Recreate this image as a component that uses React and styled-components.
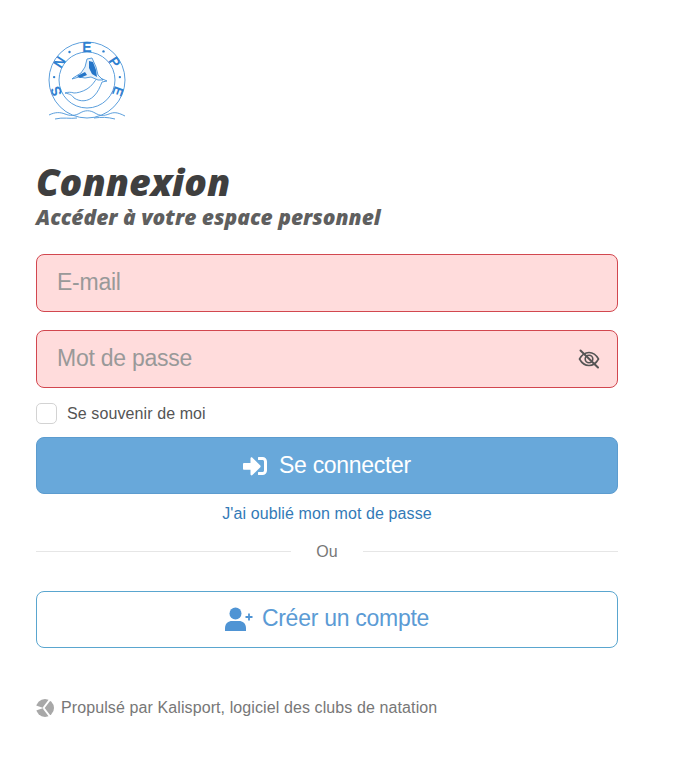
import styled, { createGlobalStyle } from 'styled-components';
import { FaSignInAlt } from 'react-icons/fa';

const GlobalStyle = createGlobalStyle`
  html, body {
    margin: 0;
    background: #ffffff;
    font-family: 'Liberation Sans', Arial, sans-serif;
  }
`;

const LOGO_LETTERS = [
  { char: 'E', angle: 0 },
  { char: 'P', angle: 57 },
  { char: 'E', angle: 110 },
  { char: 'N', angle: -57 },
  { char: 'S', angle: -110 },
];

const LOGO_DOTS = [-85, -32, 30, 85];

const ringPoint = (angle, radius) => {
  const rad = (angle * Math.PI) / 180;
  return { x: 43 + radius * Math.sin(rad), y: 37 - radius * Math.cos(rad) };
};

const Logo = () => (
  <svg width="90" height="80" viewBox="0 0 90 80" fill="none" stroke="#4a94d8" overflow="visible">
    <g transform="translate(2 2)">
      <circle cx="43" cy="37" r="38" strokeWidth="0.9" />
      <circle cx="43" cy="37" r="28" strokeWidth="0.9" />
      <g fill="#2f80d0" stroke="none" fontFamily="'Liberation Sans', sans-serif" fontSize="14" fontWeight="700" textAnchor="middle">
        {LOGO_LETTERS.map(({ char, angle }) => {
          const { x, y } = ringPoint(angle, 33);
          return (
            <text key={angle} x={x} y={y + 5} transform={`rotate(${angle} ${x} ${y})`}>
              {char}
            </text>
          );
        })}
      </g>
      {LOGO_DOTS.map((angle) => {
        const { x, y } = ringPoint(angle, 33);
        return <circle key={angle} cx={x} cy={y} r="1.2" fill="#2f80d0" stroke="none" />;
      })}
      <path d="M21 50c5 1 7 2 9 5 6 4 14 4 20-2 4-4 6-9 8-14l5-1-9-4c-4 5-6 9-11 12-5 3-10 4-13 4-3-1-6-1-9 0z" strokeWidth="0.9" fill="#fff" />
      <g transform="translate(-2 5)">
        <path d="M31 30l8-5 4-6 2-8 5-1 4 9 2 8 5 5-5 0-7-3-6 1-6-1-7 2z" strokeWidth="0.9" fill="#e8f2fb" />
        <path d="M47 13l4 1 3 8 1 7-5-3-3-6zM35 28l8-4 2 3-7 3z" fill="#2475c8" stroke="none" />
      </g>
      <path d="M5 72c6-3 11-3 16-1s10 2 15-1 10-3 15 0 9 3 14 1 8-2 16 2M11 76c8-2 15 0 22-1M50 75c8-1 13-1 21 1" strokeWidth="0.9" />
    </g>
  </svg>
);

const EyeOffIcon = () => (
  <svg width="22" height="20" viewBox="0 0 22 20" fill="none" stroke="#555555" strokeLinecap="round">
    <path d="M1.500 10C4 5.500 7.500 3.500 11 3.500S18 5.500 20.500 10C18 14.500 14.500 16.500 11 16.500S4 14.500 1.500 10z" strokeWidth="1.600" />
    <circle cx="11" cy="10" r="3.800" strokeWidth="1.600" />
    <path d="M2.500 1.500L20 18.500" strokeWidth="2" />
  </svg>
);

const UserPlusIcon = () => (
  <svg width="29" height="24" viewBox="0 0 29 24" fill="#4f94d4">
    <circle cx="10.500" cy="6.500" r="6" />
    <path d="M0 24v-3c0-4.500 3.500-7 7-7h7c3.500 0 7 2.500 7 7v3z" />
    <path d="M24 6.500v7M20.500 10h7" stroke="#4f94d4" strokeWidth="1.800" fill="none" />
  </svg>
);

const KalisportIcon = () => (
  <svg width="18" height="18" viewBox="0 0 18 18">
    <circle cx="9" cy="9" r="9" fill="#a8a8a8" />
    <path d="M0 6.500L7.500 9 0 11.500z" fill="#ffffff" />
    <path d="M7.500 9L14 0.500M7.500 9L14 17.500" stroke="#ffffff" strokeWidth="2" fill="none" />
  </svg>
);

const App = () => {
  return (
    <>
      <GlobalStyle />
      <Page>
        <LogoBox>
          <Logo />
        </LogoBox>
        <Title>Connexion</Title>
        <Subtitle>Accéder à votre espace personnel</Subtitle>

        <Form>
          <Field>
            <Input type="text" placeholder="E-mail" />
          </Field>
          <Field>
            <Input type="password" placeholder="Mot de passe" />
            <EyeButton>
              <EyeOffIcon />
            </EyeButton>
          </Field>
        </Form>

        <RememberRow>
          <Checkbox />
          <RememberLabel>Se souvenir de moi</RememberLabel>
        </RememberRow>

        <PrimaryButton>
          <FaSignInAlt size={24} />
          Se connecter
        </PrimaryButton>

        <ForgotLink>J'ai oublié mon mot de passe</ForgotLink>

        <Divider>
          <DividerText>Ou</DividerText>
        </Divider>

        <OutlineButton>
          <UserPlusIcon />
          Créer un compte
        </OutlineButton>

        <Footer>
          <KalisportIcon />
          Propulsé par Kalisport, logiciel des clubs de natation
        </Footer>
      </Page>
    </>
  );
};

export default App;

const Page = styled.div`
  width: 582px;
  padding: 41px 0 40px 36px;
  display: flex;
  flex-direction: column;
`;

const LogoBox = styled.div`
  height: 81px;
  padding-left: 6px;
  margin-bottom: 38px;
`;

const Title = styled.h1`
  margin: 0;
  font-family: 'Open Sans', sans-serif;
  font-style: italic;
  font-weight: 800;
  font-size: 37.5px;
  line-height: 44px;
  color: #3f3f3f;
`;

const Subtitle = styled.h2`
  margin: 0 0 24px;
  font-family: 'Open Sans', sans-serif;
  font-style: italic;
  font-weight: 800;
  font-size: 21px;
  line-height: 26px;
  color: #5f5f5f;
`;

const Form = styled.div`
  display: flex;
  flex-direction: column;
  gap: 18px;
`;

const Field = styled.div`
  position: relative;
  height: 58px;
`;

const Input = styled.input`
  box-sizing: border-box;
  width: 100%;
  height: 100%;
  padding: 0 20px 2px;
  border: 1px solid #d2474f;
  border-radius: 8px;
  background: #ffdcdc;
  font-family: inherit;
  font-size: 23px;
  letter-spacing: -0.25px;
  outline: none;

  &::placeholder {
    color: #999999;
    opacity: 1;
  }
`;

const EyeButton = styled.span`
  position: absolute;
  top: 19px;
  right: 18px;
  display: flex;
`;

const RememberRow = styled.label`
  display: flex;
  align-items: center;
  gap: 10px;
  height: 21px;
  margin-top: 15px;
`;

const Checkbox = styled.span`
  box-sizing: border-box;
  width: 21px;
  height: 21px;
  border: 1px solid #d3d3d3;
  border-radius: 5px;
  background: #ffffff;
`;

const RememberLabel = styled.span`
  font-size: 16px;
  letter-spacing: 0.1px;
  color: #555555;
`;

const PrimaryButton = styled.button`
  box-sizing: border-box;
  display: flex;
  align-items: center;
  justify-content: center;
  gap: 12px;
  width: 100%;
  height: 57px;
  margin-top: 13px;
  padding-bottom: 1px;
  border: 1px solid #5c9ccf;
  border-radius: 8px;
  background: #68a8da;
  color: #ffffff;
  font-family: inherit;
  font-size: 23px;
  letter-spacing: -0.3px;
`;

const ForgotLink = styled.a`
  margin-top: 10px;
  text-align: center;
  font-size: 16px;
  letter-spacing: 0.1px;
  line-height: 19px;
  color: #337ab7;
`;

const Divider = styled.div`
  display: flex;
  align-items: center;
  height: 20px;
  margin-top: 18px;

  &::before,
  &::after {
    content: '';
    flex: 1;
    height: 1px;
    background: #e6e6e6;
  }
`;

const DividerText = styled.span`
  width: 72px;
  padding-top: 1px;
  text-align: center;
  font-size: 16px;
  color: #777777;
`;

const OutlineButton = styled.button`
  box-sizing: border-box;
  display: flex;
  align-items: center;
  justify-content: center;
  gap: 8px;
  width: 100%;
  height: 57px;
  margin-top: 30px;
  padding-bottom: 3px;
  border: 1px solid #5aa6cf;
  border-radius: 8px;
  background: #ffffff;
  color: #5b9bd5;
  font-family: inherit;
  font-size: 23px;
  letter-spacing: -0.27px;
`;

const Footer = styled.div`
  display: flex;
  align-items: center;
  gap: 7px;
  margin-top: 50px;
  font-size: 16px;
  letter-spacing: 0.1px;
  line-height: 19px;
  color: #777777;
`;
